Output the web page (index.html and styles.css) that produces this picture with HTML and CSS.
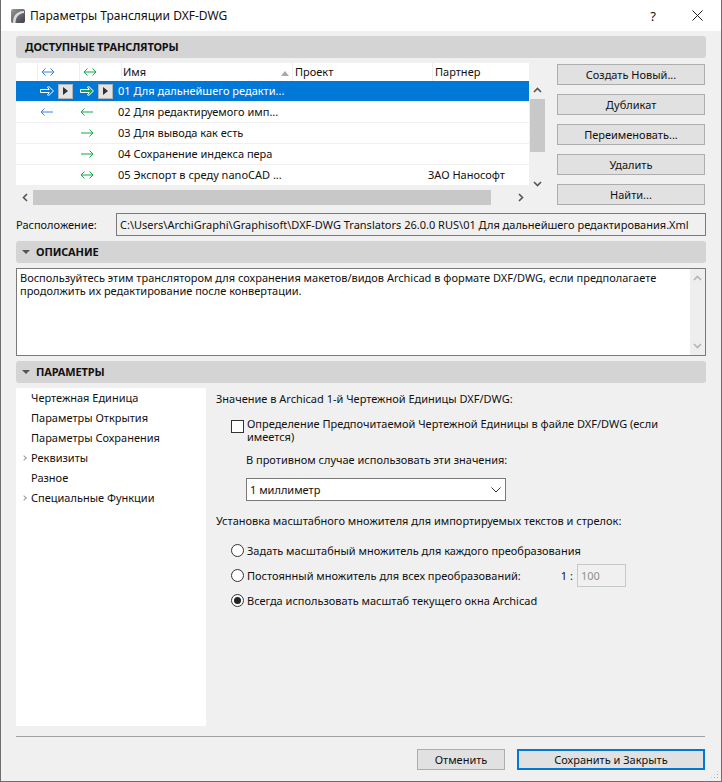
FILE: index.html
```html
<!DOCTYPE html>
<html lang="ru">
<head>
    <meta charset="UTF-8">
    <title>Параметры Трансляции DXF-DWG</title>
    <link rel="stylesheet" href="styles.css">
</head>
<body>
<svg class="defs" width="0" height="0">
    <defs>
        <linearGradient id="logo-bg" x1="0" y1="0" x2="1" y2="1">
            <stop offset="0" stop-color="#9a9a9e"/>
            <stop offset="1" stop-color="#3e3e42"/>
        </linearGradient>
        <symbol id="both" viewBox="0 0 14 10"><path d="M1 5h12M4.500 1.500 1 5l3.500 3.500M9.500 1.500 13 5 9.500 8.500" fill="none" stroke="currentColor"/></symbol>
        <symbol id="left" viewBox="0 0 14 10"><path d="M1 5h12M4.500 1.500 1 5l3.500 3.500" fill="none" stroke="currentColor"/></symbol>
        <symbol id="right" viewBox="0 0 14 10"><path d="M1 5h12M9.500 1.500 13 5 9.500 8.500" fill="none" stroke="currentColor"/></symbol>
        <symbol id="hollow" viewBox="0 0 14 10"><path d="M0.500 3.500h8.700L7.500 1l1-.7L13.500 5l-5 4.700-1-.7 1.700-2.500H0.500z" fill="none" stroke="#fff"/></symbol>
        <symbol id="hollow-green" viewBox="0 0 14 10"><path d="M0.500 3.500h8.700L7.500 1l1-.7L13.500 5l-5 4.700-1-.7 1.700-2.500H0.500z" fill="#13a84a" stroke="#fff"/></symbol>
        <symbol id="chev-up" viewBox="0 0 9 6"><path d="M1 5 4.500 1.500 8 5" fill="none" stroke="currentColor" stroke-width="1.600"/></symbol>
        <symbol id="chev-down" viewBox="0 0 9 6"><path d="M1 1 4.500 4.500 8 1" fill="none" stroke="currentColor" stroke-width="1.600"/></symbol>
        <symbol id="chev-left" viewBox="0 0 6 9"><path d="M5 1 1.500 4.500 5 8" fill="none" stroke="currentColor" stroke-width="1.600"/></symbol>
        <symbol id="chev-right" viewBox="0 0 6 9"><path d="M1 1 4.500 4.500 1 8" fill="none" stroke="currentColor" stroke-width="1.600"/></symbol>
    </defs>
</svg>

<div class="window">
    <header class="titlebar">
        <svg class="logo" width="16" height="16" viewBox="0 0 16 16">
            <rect x="1" y="1" width="14" height="14" rx="2" fill="url(#logo-bg)"/>
            <path d="M3 15C3 8 6 3.500 14 3v2C9 5.500 5.500 9 5.500 15z" fill="#dcdcde"/>
        </svg>
        <span class="title">Параметры Трансляции DXF-DWG</span>
        <span class="help">?</span>
        <svg class="close" width="11" height="11" viewBox="0 0 11 11"><path d="M.5.500l10 10M10.500.500l-10 10" stroke="#222" fill="none"/></svg>
    </header>

    <main class="content">
        <div class="section-head plain">ДОСТУПНЫЕ ТРАНСЛЯТОРЫ</div>

        <div class="translators">
            <div class="table-wrap">
                <div class="table-top">
                    <div class="table-body">
                        <div class="row head">
                            <span></span>
                            <span class="cell-icon blue"><svg width="14" height="10"><use href="#both"/></svg></span>
                            <span class="cell-icon green head-green"><svg width="14" height="10"><use href="#both"/></svg></span>
                            <span class="cell-name">Имя<i class="sort"></i></span>
                            <span class="cell-text">Проект</span>
                            <span class="cell-text">Партнер</span>
                        </div>
                        <div class="row selected">
                            <span></span>
                            <span class="cell-icon"><svg width="14" height="10"><use href="#hollow"/></svg><b class="play"></b></span>
                            <span class="cell-icon second"><svg width="14" height="10"><use href="#hollow-green"/></svg><b class="play"></b></span>
                            <span class="name">01 Для дальнейшего редакти...</span>
                            <span></span><span></span>
                        </div>
                        <div class="row">
                            <span></span>
                            <span class="cell-icon blue"><svg width="14" height="10"><use href="#left"/></svg></span>
                            <span class="cell-icon green second"><svg width="14" height="10"><use href="#left"/></svg></span>
                            <span class="name">02 Для редактируемого имп...</span>
                            <span></span><span></span>
                        </div>
                        <div class="row">
                            <span></span><span></span>
                            <span class="cell-icon green second"><svg width="14" height="10"><use href="#right"/></svg></span>
                            <span class="name">03 Для вывода как есть</span>
                            <span></span><span></span>
                        </div>
                        <div class="row">
                            <span></span><span></span>
                            <span class="cell-icon green second"><svg width="14" height="10"><use href="#right"/></svg></span>
                            <span class="name">04 Сохранение индекса пера</span>
                            <span></span><span></span>
                        </div>
                        <div class="row">
                            <span></span><span></span>
                            <span class="cell-icon green second"><svg width="14" height="10"><use href="#both"/></svg></span>
                            <span class="name">05 Экспорт в среду nanoCAD ...</span>
                            <span></span>
                            <span class="partner">ЗАО Нанософт</span>
                        </div>
                    </div>
                    <div class="vscroll">
                        <svg class="arrow" width="9" height="6"><use href="#chev-up"/></svg>
                        <div class="vthumb"></div>
                        <svg class="arrow" width="9" height="6"><use href="#chev-down"/></svg>
                    </div>
                </div>
                <div class="hscroll">
                    <span class="harrow"><svg width="6" height="9"><use href="#chev-left"/></svg></span>
                    <div class="hthumb"></div>
                    <span class="harrow end"><svg width="6" height="9"><use href="#chev-right"/></svg></span>
                </div>
            </div>
            <div class="side-buttons">
                <button class="btn">Создать Новый...</button>
                <button class="btn">Дубликат</button>
                <button class="btn">Переименовать...</button>
                <button class="btn">Удалить</button>
                <button class="btn">Найти...</button>
            </div>
        </div>

        <div class="location">
            <span class="location-label">Расположение:</span>
            <div class="location-path">C:\Users\ArchiGraphi\Graphisoft\DXF-DWG Translators 26.0.0 RUS\01 Для дальнейшего редактирования.Xml</div>
        </div>

        <div class="section-head"><i class="tri"></i>ОПИСАНИЕ</div>
        <div class="description">
            <div class="description-text">Воспользуйтесь этим транслятором для сохранения макетов/видов Archicad в формате DXF/DWG, если предполагаете<br>продолжить их редактирование после конвертации.</div>
            <div class="desc-scroll">
                <svg width="9" height="6"><use href="#chev-up"/></svg>
                <svg width="9" height="6"><use href="#chev-down"/></svg>
            </div>
        </div>

        <div class="section-head"><i class="tri"></i>ПАРАМЕТРЫ</div>
        <div class="params">
            <ul class="tree">
                <li>Чертежная Единица</li>
                <li>Параметры Открытия</li>
                <li>Параметры Сохранения</li>
                <li class="has-kids">Реквизиты</li>
                <li>Разное</li>
                <li class="has-kids">Специальные Функции</li>
            </ul>
            <div class="pane">
                <div class="pane-title">Значение в Archicad 1-й Чертежной Единицы DXF/DWG:</div>
                <div class="check-row">
                    <span class="checkbox"></span>
                    <span class="check-label">Определение Предпочитаемой Чертежной Единицы в файле DXF/DWG (если<br>имеется)</span>
                </div>
                <div class="otherwise">В противном случае использовать эти значения:</div>
                <div class="select">
                    <span>1 миллиметр</span>
                    <svg width="10" height="6" viewBox="0 0 10 6"><path d="M0.500 0.500 5 5 9.500 0.500" fill="none" stroke="#333"/></svg>
                </div>
                <div class="pane-title scale-title">Установка масштабного множителя для импортируемых текстов и стрелок:</div>
                <div class="radio-row"><span class="radio"></span>Задать масштабный множитель для каждого преобразования</div>
                <div class="radio-row">
                    <span class="radio"></span>Постоянный множитель для всех преобразований:
                    <span class="ratio">1 :</span>
                    <span class="ratio-input">100</span>
                </div>
                <div class="radio-row"><span class="radio on"></span>Всегда использовать масштаб текущего окна Archicad</div>
            </div>
        </div>

        <footer class="footer">
            <button class="btn cancel">Отменить</button>
            <button class="btn primary">Сохранить и Закрыть</button>
        </footer>
    </main>
    <div class="grip"></div>
</div>
</body>
</html>
```

FILE: styles.css
```css
html, body {
    margin: 0;
    padding: 0;
}
body {
    font-family: "Noto Sans", "Open Sans", sans-serif;
    font-size: 11px;
    color: #111;
    background: #f0f0f0;
    overflow: hidden;
}
.defs {
    position: absolute;
}
.window {
    position: relative;
    width: 722px;
    height: 782px;
    box-sizing: border-box;
    border: 1px solid #6d6d6d;
    border-top: none;
    background: #f0f0f0;
    display: flex;
    flex-direction: column;
}
.titlebar {
    height: 31px;
    flex: none;
    background: #fff;
    display: flex;
    align-items: center;
    padding: 0 18px 0 9px;
}
.logo {
    margin-right: 4px;
}
.title {
    font-size: 12px;
    flex: 1;
}
.help {
    font-size: 13px;
    margin-right: 36px;
}
.content {
    flex: 1;
    padding: 5px 15px 0;
    display: flex;
    flex-direction: column;
}
.section-head {
    height: 22px;
    flex: none;
    background: #d4d4d4;
    border-radius: 3px;
    font-weight: 700;
    font-size: 11px;
    letter-spacing: -0.15px;
    line-height: 22px;
    display: flex;
    align-items: center;
    padding-left: 6px;
}
.section-head.plain {
    padding-left: 9px;
}
.tri {
    width: 0;
    height: 0;
    border-left: 4px solid transparent;
    border-right: 4px solid transparent;
    border-top: 4px solid #555;
    margin-right: 6px;
}

/* translators block */
.translators {
    display: flex;
    margin-top: 5px;
    height: 142px;
}
.table-wrap {
    width: 529px;
}
.table-top {
    display: flex;
    height: 122px;
}
.table-body {
    width: 513px;
    height: 122px;
    background: #f0f0f0;
}
.row {
    display: grid;
    grid-template-columns: 21px 42px 42px 171px 140px 97px;
    height: 20px;
    margin-bottom: 1px;
    background: #fff;
    align-items: center;
    line-height: 20px;
}
.row.head {
    height: 18px;
    margin-bottom: 0;
    line-height: 18px;
}
.row.head > span {
    height: 18px;
    border-left: 1px solid #eee;
    box-sizing: border-box;
}
.row.head > span:first-child {
    border-left: none;
}
.row.selected {
    background: #0078d7;
    color: #fff;
}
.cell-icon {
    display: flex;
    align-items: center;
    padding-left: 3px;
}
.cell-icon.second {
    padding-left: 1px;
}
.cell-icon.head-green {
    padding-left: 3px;
}
.cell-icon svg {
    display: block;
}
.blue { color: #3b82e6; }
.green { color: #13a84a; }
.selected .cell-icon {
    gap: 4px;
}
.play {
    width: 15px;
    height: 15px;
    box-sizing: border-box;
    border: 1px solid #b5b5b5;
    background: #e4e4e4;
    display: flex;
    align-items: center;
    justify-content: center;
}
.play::after {
    content: "";
    border-left: 5px solid #333;
    border-top: 4px solid transparent;
    border-bottom: 4px solid transparent;
}
.cell-name {
    position: relative;
    padding-left: 1px;
}
.sort {
    position: absolute;
    right: 3px;
    top: 8px;
    border-left: 4px solid transparent;
    border-right: 4px solid transparent;
    border-bottom: 5px solid #a8a8a8;
}
.cell-text {
    padding-left: 2px;
}
.name {
    margin-left: -3px;
    white-space: nowrap;
}
.partner {
    margin-left: -4px;
    white-space: nowrap;
}
.vscroll {
    width: 16px;
    padding-top: 18px;
    display: flex;
    flex-direction: column;
    align-items: center;
    color: #555;
}
.vscroll .arrow {
    margin: 6px 0;
    flex: none;
}
.vthumb {
    width: 15px;
    height: 53px;
    background: #c8c8c8;
    flex: none;
    margin-bottom: 23px;
}
.hscroll {
    height: 15px;
    margin-top: 5px;
    display: flex;
    align-items: center;
    color: #555;
}
.harrow {
    width: 17px;
    height: 15px;
    display: flex;
    align-items: center;
    justify-content: center;
}
.hthumb {
    width: 458px;
    height: 15px;
    background: #c8c8c8;
}
.harrow.end {
    margin-left: 21px;
}
.side-buttons {
    margin-left: 12px;
    padding-top: 1px;
    display: flex;
    flex-direction: column;
    gap: 9px;
}
.btn {
    font: inherit;
    color: inherit;
    width: 148px;
    height: 21px;
    padding: 0;
    box-sizing: border-box;
    border: 1px solid #adadad;
    background: #e1e1e1;
    flex: none;
}

/* location */
.location {
    display: flex;
    align-items: center;
    margin-top: 8px;
    height: 23px;
    margin-bottom: 5px;
}
.location-label {
    width: 100px;
    flex: none;
}
.location-path {
    width: 590px;
    height: 23px;
    box-sizing: border-box;
    border: 1px solid #7a7a7a;
    background: #f0f0f0;
    padding-left: 3px;
    line-height: 21px;
    white-space: nowrap;
    overflow: hidden;
}

/* description */
.description {
    margin: 5px 0;
    height: 88px;
    box-sizing: border-box;
    border: 1px solid #7a7a7a;
    background: #fff;
    display: flex;
}
.description-text {
    flex: 1;
    padding: 2px 3px;
    line-height: 13px;
    white-space: nowrap;
}
.desc-scroll {
    width: 15px;
    background: #eeeeee;
    color: #b4b4b4;
    display: flex;
    flex-direction: column;
    justify-content: space-between;
    align-items: center;
    padding: 6px 0;
}

/* parameters */
.params {
    display: flex;
    margin-top: 5px;
    height: 338px;
}
.tree {
    width: 190px;
    flex: none;
    margin: 0;
    padding: 0;
    list-style: none;
    background: #fff;
}
.tree li {
    height: 20px;
    line-height: 20px;
    padding-left: 15px;
    position: relative;
}
.has-kids::before {
    content: "";
    position: absolute;
    left: 6px;
    top: 8px;
    width: 3px;
    height: 3px;
    border-top: 1px solid #999;
    border-right: 1px solid #999;
    transform: rotate(45deg);
}
.pane {
    padding: 3px 0 0 10px;
    flex: 1;
}
.pane-title {
    height: 16px;
    line-height: 16px;
    white-space: nowrap;
}
.check-row {
    display: flex;
    margin-top: 10px;
    margin-left: 15px;
}
.checkbox {
    width: 13px;
    height: 13px;
    box-sizing: border-box;
    border: 1px solid #333;
    background: #fff;
    margin-top: 3px;
    margin-right: 3px;
    flex: none;
}
.check-label {
    line-height: 13px;
    white-space: nowrap;
}
.otherwise {
    margin: 9px 0 0 30px;
    line-height: 16px;
}
.select {
    margin: 10px 0 0 30px;
    width: 260px;
    height: 23px;
    box-sizing: border-box;
    border: 1px solid #7a7a7a;
    background: #fff;
    display: flex;
    align-items: center;
    justify-content: space-between;
    padding: 0 4px 0 3px;
}
.scale-title {
    margin-top: 12px;
}
.radio-row {
    display: flex;
    align-items: center;
    height: 20px;
    margin-top: 5px;
    margin-left: 15px;
    white-space: nowrap;
}
.scale-title + .radio-row {
    margin-top: 11px;
}
.radio {
    width: 13px;
    height: 13px;
    box-sizing: border-box;
    border: 1px solid #333;
    border-radius: 50%;
    background: #fff;
    margin-right: 3px;
    display: flex;
    align-items: center;
    justify-content: center;
    flex: none;
}
.radio.on::after {
    content: "";
    width: 7px;
    height: 7px;
    border-radius: 50%;
    background: #222;
}
.ratio {
    margin-left: 40px;
}
.ratio-input {
    width: 49px;
    height: 23px;
    box-sizing: border-box;
    border: 1px solid #c8c8c8;
    color: #909090;
    line-height: 21px;
    padding-left: 3px;
    margin-left: 4px;
}

/* footer */
.footer {
    margin-top: 10px;
    margin-right: 1px;
    border-top: 1px solid #a0a0a0;
    padding-top: 12px;
    display: flex;
    justify-content: flex-end;
    gap: 12px;
}
.cancel {
    width: 88px;
}
.primary {
    width: 188px;
    border: 2px solid #0078d7;
}
.grip {
    position: absolute;
    right: 2px;
    bottom: 2px;
    width: 9px;
    height: 9px;
    background-image: radial-gradient(circle, #a8a8a8 1px, transparent 1px);
    background-size: 3px 3px;
    clip-path: polygon(100% 0, 100% 100%, 0 100%);
}
```
